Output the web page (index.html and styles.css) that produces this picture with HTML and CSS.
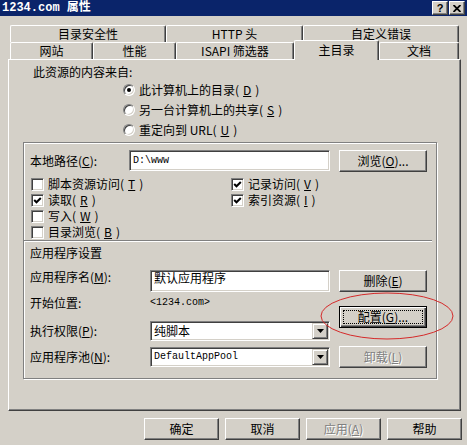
FILE: index.html
```html
<!DOCTYPE html>
<html lang="zh-CN">

<head>
    <meta charset="UTF-8">
    <title>1234.com 属性</title>
    <link rel="stylesheet" href="styles.css">
</head>

<body>

    <div class="window">
        <div class="titlebar">
            <span class="titlebar__text">1234.com 属性</span>
            <div class="titlebar__buttons">
                <span class="caption-btn">?</span>
                <span class="caption-btn">
                    <svg width="8" height="7" viewBox="0 0 8 7">
                        <path d="M0.5 0 L7.5 7 M7.5 0 L0.5 7" stroke="#000" stroke-width="1.8" />
                    </svg>
                </span>
            </div>
        </div>

        <div class="tabs">
            <div class="tabs__row tabs__row--back">
                <div class="tab">目录安全性</div>
                <div class="tab">HTTP 头</div>
                <div class="tab">自定义错误</div>
            </div>
            <div class="tabs__row tabs__row--front">
                <div class="tab">网站</div>
                <div class="tab">性能</div>
                <div class="tab">ISAPI 筛选器</div>
                <div class="tab tab--active">主目录</div>
                <div class="tab">文档</div>
            </div>
        </div>

        <div class="panel">
            <p class="panel__heading">此资源的内容来自:</p>
            <ul class="radios">
                <li class="radios__item"><span class="radio radio--checked"></span>此计算机上的目录(<u>D</u>)</li>
                <li class="radios__item"><span class="radio"></span>另一台计算机上的共享(<u>S</u>)</li>
                <li class="radios__item"><span class="radio"></span>重定向到 URL(<u>U</u>)</li>
            </ul>

            <div class="group">
                <div class="path-row">
                    <span class="path-row__label">本地路径(<u>C</u>):</span>
                    <span class="field field--path mono">D:\www</span>
                    <span class="btn btn--side">浏览(<u>O</u>)...</span>
                </div>

                <div class="checks">
                    <label class="checks__item"><span class="check"></span>脚本资源访问(<u>T</u>)</label>
                    <label class="checks__item"><span class="check check--on"><svg width="9" height="9" viewBox="0 0 9 9"><path d="M1.2 4 L3.5 6.3 L7.8 2" fill="none" stroke="#000" stroke-width="2" /></svg></span>读取(<u>R</u>)</label>
                    <label class="checks__item"><span class="check"></span>写入(<u>W</u>)</label>
                    <label class="checks__item"><span class="check"></span>目录浏览(<u>B</u>)</label>
                    <label class="checks__item"><span class="check check--on"><svg width="9" height="9" viewBox="0 0 9 9"><path d="M1.2 4 L3.5 6.3 L7.8 2" fill="none" stroke="#000" stroke-width="2" /></svg></span>记录访问(<u>V</u>)</label>
                    <label class="checks__item"><span class="check check--on"><svg width="9" height="9" viewBox="0 0 9 9"><path d="M1.2 4 L3.5 6.3 L7.8 2" fill="none" stroke="#000" stroke-width="2" /></svg></span>索引资源(<u>I</u>)</label>
                </div>

                <div class="group__sep"></div>

                <div class="app">
                    <div class="app__main">
                        <div class="app__title">应用程序设置</div>

                        <div class="app-row app-row--name">
                            <span class="app-row__label">应用程序名(<u>M</u>):</span>
                            <span class="field field--app">默认应用程序</span>
                        </div>

                        <div class="app-row app-row--start">
                            <span class="app-row__label">开始位置:</span>
                            <span class="mono">&lt;1234.com&gt;</span>
                        </div>

                        <div class="app-row app-row--perm">
                            <span class="app-row__label">执行权限(<u>P</u>):</span>
                            <span class="combo">
                                <span class="combo__value">纯脚本</span>
                                <span class="combo__btn"><svg width="7" height="4" viewBox="0 0 7 4"><polygon points="0,0 7,0 3.5,4" fill="#000" /></svg></span>
                            </span>
                        </div>

                        <div class="app-row app-row--pool">
                            <span class="app-row__label">应用程序池(<u>N</u>):</span>
                            <span class="combo">
                                <span class="combo__value mono">DefaultAppPool</span>
                                <span class="combo__btn"><svg width="7" height="4" viewBox="0 0 7 4"><polygon points="0,0 7,0 3.5,4" fill="#000" /></svg></span>
                            </span>
                        </div>
                    </div>

                    <div class="app__side">
                        <span class="btn btn--side btn--remove">删除(<u>E</u>)</span>
                        <span class="btn btn--side btn--default btn--config">配置(<u>G</u>)...</span>
                        <span class="btn btn--side btn--disabled btn--unload">卸载(<u>L</u>)</span>
                    </div>
                </div>
            </div>
        </div>

        <div class="footer">
            <span class="btn btn--footer">确定</span>
            <span class="btn btn--footer">取消</span>
            <span class="btn btn--footer btn--disabled">应用(<u>A</u>)</span>
            <span class="btn btn--footer">帮助</span>
        </div>

        <svg class="mark" width="136" height="50" viewBox="0 0 136 50">
            <ellipse cx="67" cy="24" rx="66" ry="23" fill="none" stroke="#d42a2a" stroke-width="1" />
        </svg>
    </div>

</body>

</html>
```

FILE: styles.css
```css
* {
    box-sizing: border-box;
}

body {
    margin: 0;
    background: #d4d0c8;
    font-family: "SimSun", "Noto Sans CJK SC", sans-serif;
    font-size: 12px;
    line-height: 12px;
    color: #000;
}

u {
    text-underline-offset: 1px;
}

.mono {
    font-family: "Liberation Mono", "Noto Sans CJK SC", monospace;
    font-size: 10px;
}

.window {
    position: relative;
    width: 467px;
    height: 445px;
    overflow: hidden;
    background: #d4d0c8;
}

/* title bar */

.titlebar {
    display: flex;
    align-items: center;
    justify-content: space-between;
    height: 16px;
    padding: 0 2px;
    background: #0a246a;
}

.titlebar__text {
    color: #fff;
    font-family: "Liberation Mono", "Noto Sans CJK SC", monospace;
    font-weight: bold;
    font-size: 12px;
}

.titlebar__buttons {
    display: flex;
    gap: 1px;
}

.caption-btn {
    display: flex;
    align-items: center;
    justify-content: center;
    width: 16px;
    height: 14px;
    background: #d4d0c8;
    border: 1px solid;
    border-color: #fff #404040 #404040 #fff;
    box-shadow: inset -1px -1px #808080;
    font: bold 11px "Liberation Sans", sans-serif;
}

/* tabs */

.tabs {
    margin-top: 9px;
    padding-left: 10px;
}

.tabs__row {
    display: grid;
    height: 17px;
    align-items: start;
}

.tabs__row--back {
    grid-template-columns: 156px 137px 156px;
}

.tabs__row--front {
    grid-template-columns: 83px 83px 118px 85px 80px;
}

.tab {
    display: flex;
    align-items: center;
    justify-content: center;
    height: 17px;
    background: #d4d0c8;
    border-top: 1px solid #fff;
    border-left: 1px solid #fff;
    border-right: 1px solid #404040;
    border-radius: 2px 2px 0 0;
    box-shadow: inset -1px 0 #808080;
}

.tab--active {
    position: relative;
    z-index: 1;
    height: 20px;
    margin-top: -2px;
    padding-bottom: 2px;
}

/* tab panel */

.panel {
    margin-left: 8px;
    width: 453px;
    height: 352px;
    padding: 5px 0 0 14px;
    border: 1px solid;
    border-color: #fff #404040 #404040 #fff;
    box-shadow: inset -1px -1px #808080;
}

.panel__heading {
    margin: 0;
    padding-left: 10px;
    height: 14px;
    line-height: 14px;
}

.radios {
    list-style: none;
    margin: 1px 0 0;
    padding: 0 0 0 100px;
}

.radios__item {
    display: flex;
    align-items: center;
    gap: 4px;
    height: 20px;
}

.radio {
    position: relative;
    flex: none;
    width: 12px;
    height: 12px;
    border-radius: 50%;
    background: #fff;
    border: 1px solid;
    border-color: #808080 #fff #fff #808080;
    box-shadow: inset 1px 1px #404040, inset -1px -1px #d4d0c8;
}

.radio--checked::after {
    content: "";
    position: absolute;
    left: 3px;
    top: 3px;
    width: 4px;
    height: 4px;
    border-radius: 50%;
    background: #000;
}

.group {
    margin-top: 2px;
    width: 414px;
    height: 237px;
    border: 1px solid #808080;
    box-shadow: inset 1px 1px #fff, 1px 1px #fff;
}

.path-row {
    display: flex;
    align-items: flex-start;
    padding: 7px 0 0 6px;
}

.path-row__label {
    width: 99px;
    line-height: 21px;
}

.field {
    display: flex;
    align-items: center;
    background: #fff;
    border: 1px solid;
    border-color: #808080 #fff #fff #808080;
    box-shadow: inset 1px 1px #404040, inset -1px -1px #d4d0c8;
    padding: 0 3px;
}

.field--path {
    width: 201px;
    height: 21px;
}

.field--app {
    width: 180px;
    height: 22px;
    align-items: flex-start;
    padding-top: 1px;
}

.checks {
    display: grid;
    grid-template-columns: 200px 200px;
    grid-template-rows: repeat(4, 16px);
    grid-auto-flow: column;
    margin: 4px 0 0 7px;
}

.checks__item {
    display: flex;
    align-items: center;
    gap: 4px;
}

.check {
    display: flex;
    align-items: center;
    justify-content: center;
    flex: none;
    width: 13px;
    height: 13px;
    background: #fff;
    border: 1px solid;
    border-color: #808080 #fff #fff #808080;
    box-shadow: inset 1px 1px #404040, inset -1px -1px #d4d0c8;
}

.group__sep {
    margin-right: 4px;
    border-top: 1px solid #808080;
    border-bottom: 1px solid #fff;
}

/* application settings */

.app {
    display: flex;
}

.app__main {
    width: 306px;
    padding-left: 6px;
}

.app__title {
    margin-top: 4px;
    line-height: 14px;
}

.app-row {
    display: flex;
    align-items: center;
}

.app-row__label {
    width: 120px;
}

.app-row--name {
    align-items: flex-start;
    margin-top: 10px;
}

.app-row--name .app-row__label {
    padding-top: 1px;
}

.app-row--start {
    margin-top: 5px;
    height: 12px;
}

.app-row--perm {
    margin-top: 12px;
}

.app-row--pool {
    margin-top: 6px;
}

.combo {
    display: flex;
    align-items: center;
    justify-content: space-between;
    width: 180px;
    height: 20px;
    padding: 2px;
    background: #fff;
    border: 1px solid;
    border-color: #808080 #fff #fff #808080;
    box-shadow: inset 1px 1px #404040, inset -1px -1px #d4d0c8;
}

.combo__value {
    padding-left: 1px;
}

.combo__btn {
    display: flex;
    align-items: center;
    justify-content: center;
    width: 16px;
    height: 16px;
    margin-right: -1px;
    background: #d4d0c8;
    border: 1px solid;
    border-color: #d4d0c8 #404040 #404040 #d4d0c8;
    box-shadow: inset 1px 1px #fff, inset -1px -1px #808080;
}

.app__side {
    display: flex;
    flex-direction: column;
    margin-left: 9px;
}

/* buttons */

.btn {
    position: relative;
    display: flex;
    align-items: center;
    justify-content: center;
    flex: none;
    height: 22px;
    background: #d4d0c8;
    border: 1px solid;
    border-color: #fff #404040 #404040 #fff;
    box-shadow: inset -1px -1px #808080;
}

.btn--side {
    width: 88px;
    margin-left: 9px;
}

.app__side .btn--side {
    margin-left: 0;
}

.btn--remove {
    margin-top: 28px;
}

.btn--config {
    margin-top: 14px;
}

.btn--unload {
    margin-top: 18px;
}

.btn--default {
    border-color: #000;
    box-shadow: inset 1px 1px #fff, inset -1px -1px #404040, inset -2px -2px #808080;
}

.btn--default::after {
    content: "";
    position: absolute;
    inset: 3px;
    border: 1px dotted #000;
}

.btn--disabled {
    color: #808080;
    text-shadow: 1px 1px #fff;
}

.footer {
    display: flex;
    gap: 6px;
    margin-top: 7px;
    padding-left: 144px;
}

.btn--footer {
    width: 75px;
}

.mark {
    position: absolute;
    left: 320px;
    top: 292px;
}
```
